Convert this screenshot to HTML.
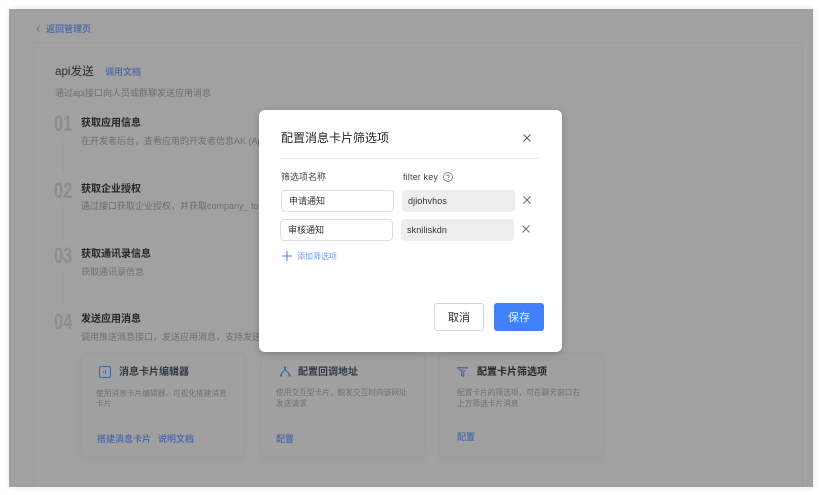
<!DOCTYPE html>
<html lang="zh"><head><meta charset="utf-8"><style>
html,body{margin:0;padding:0;background:#fff}
body{width:822px;height:495px;overflow:hidden;position:relative;font-family:"Liberation Sans","Noto Sans CJK SC",sans-serif}
.a{position:absolute;white-space:nowrap}
#page{position:absolute;left:9px;top:9px;width:804px;height:478px;background:#a1a1a1;box-shadow:0 0 6px rgba(0,0,0,.12);overflow:hidden}
#bg{position:absolute;left:-9px;top:-9px;width:822px;height:495px;filter:blur(.3px)}
.blue{color:#4464a8}
.t{font-size:10px;font-weight:700;color:#262626;line-height:14px}
.d{font-size:9px;color:#6e6e6e;line-height:13px}
.n{font-family:"Liberation Sans",sans-serif;font-weight:700;font-size:22px;color:#8d8d8d;line-height:24px;transform:scaleX(.75);transform-origin:left top}
.card{position:absolute;top:353px;height:104px;background:#a0a0a0;border:1px solid #9b9b9b;border-radius:4px;box-sizing:border-box;box-shadow:0 3px 10px rgba(0,0,0,.03)}
.ct{font-size:10px;font-weight:700;color:#333a44;line-height:14px}
.cd{font-size:7.7px;color:#707070;line-height:11px}
.cl{font-size:9px;color:#4464a8;font-weight:500;line-height:13px}
#dlg{position:absolute;left:259px;top:110px;width:303px;height:242px;background:#fff;border-radius:6px;box-shadow:0 2px 8px rgba(0,0,0,.18)}
.in{position:absolute;box-sizing:border-box;height:22px;border-radius:4px;font-size:9px;line-height:20px;color:#333;white-space:nowrap}
.w{background:#fff;border:1px solid #dedede;padding-left:7px;width:113px}
.g{background:#ededed;padding-left:6px;width:113px;line-height:22px}
svg{position:absolute;overflow:visible}
</style></head><body>
<div id="page"><div id="bg">
<svg style="left:35px;top:25px" width="6" height="8" viewBox="0 0 6 8"><path d="M4.500 1.500 L2 4 L4.500 6.500" fill="none" stroke="#4464a8" stroke-width=".7"/></svg>
<div class="a blue" style="left:46px;top:22px;font-size:9px;line-height:14px;font-weight:500">返回管理页</div>
<div class="a" style="left:33px;top:42px;width:770px;height:460px;border:1px solid #9c9c9c;box-sizing:border-box"></div>
<div class="a" style="left:55px;top:64px;font-size:11.600px;line-height:16px;color:#2a2a2a">api发送</div>
<div class="a blue" style="left:105px;top:65px;font-size:9px;line-height:14px;font-weight:500">调用文档</div>
<div class="a d" style="left:55px;top:87px">通过api接口向人员或群聊发送应用消息</div>

<div class="a n" style="left:54px;top:112px">01</div>
<div class="a t" style="left:81px;top:117px">获取应用信息</div>
<div class="a d" style="left:81px;top:135px">在开发者后台，查看应用的开发者信息AK (App</div>
<svg style="left:60px;top:138px" width="8" height="36" viewBox="0 0 8 36"><path d="M2.500 0V34L6 30.500" fill="none" stroke="#989898" stroke-width=".8"/></svg>

<div class="a n" style="left:54px;top:179px">02</div>
<div class="a t" style="left:81px;top:183px">获取企业授权</div>
<div class="a d" style="left:81px;top:200px">通过接口获取企业授权，并获取company_ token</div>
<svg style="left:60px;top:204px" width="8" height="36" viewBox="0 0 8 36"><path d="M2.500 0V34L6 30.500" fill="none" stroke="#989898" stroke-width=".8"/></svg>

<div class="a n" style="left:54px;top:244px">03</div>
<div class="a t" style="left:81px;top:248px">获取通讯录信息</div>
<div class="a d" style="left:81px;top:266px">获取通讯录信息</div>
<svg style="left:60px;top:269px" width="8" height="36" viewBox="0 0 8 36"><path d="M2.500 0V34L6 30.500" fill="none" stroke="#989898" stroke-width=".8"/></svg>

<div class="a n" style="left:54px;top:310px">04</div>
<div class="a t" style="left:81px;top:313px">发送应用消息</div>
<div class="a d" style="left:81px;top:331px">调用推送消息接口，发送应用消息，支持发送</div>

<div class="card" style="left:81px;width:164px"></div>
<svg style="left:99px;top:366px" width="12" height="12" viewBox="0 0 12 12"><rect x=".5" y=".5" width="11" height="11" rx="1.500" fill="#9aa0ad" stroke="#4464a8" stroke-width="1"/><path d="M4.500 5.500v1.500M6.500 4v4" stroke="#4464a8" stroke-width=".9"/></svg>
<div class="a ct" style="left:119px;top:366px">消息卡片编辑器</div>
<div class="a cd" style="left:96px;top:388px">使用消息卡片编辑器，可视化搭建消息</div>
<div class="a cd" style="left:96px;top:398px">卡片</div>
<div class="a cl" style="left:97px;top:433px">搭建消息卡片</div>
<div class="a cl" style="left:158px;top:433px">说明文档</div>

<div class="card" style="left:261px;width:164px"></div>
<svg style="left:280px;top:366px" width="11" height="11" viewBox="0 0 11 11"><path d="M1 9 C1 6 5 6 5 2 C5 6 9.500 6 9.500 9" fill="none" stroke="#4464a8" stroke-width="1.100"/><circle cx="5" cy="1.500" r="1.200" fill="#4464a8"/><circle cx="1" cy="9.500" r="1.100" fill="#4464a8"/><circle cx="9.500" cy="9.500" r="1.100" fill="#4464a8"/></svg>
<div class="a ct" style="left:298px;top:366px">配置回调地址</div>
<div class="a cd" style="left:276px;top:387px">使用交互型卡片，触发交互时向该网址</div>
<div class="a cd" style="left:276px;top:398px">发送请求</div>
<div class="a cl" style="left:276px;top:433px">配置</div>

<div class="card" style="left:439px;width:164px"></div>
<svg style="left:457px;top:367px" width="11" height="10" viewBox="0 0 11 10"><path d="M.5 .6H10.500L6.800 4.500V9.500L4.500 8.500V4.500Z" fill="#7f8ba5" stroke="#4464a8" stroke-width=".9"/><path d="M7 2.500H10" stroke="#a1a1a1" stroke-width="1"/></svg>
<div class="a ct" style="left:477px;top:366px;color:#262626">配置卡片筛选项</div>
<div class="a cd" style="left:457px;top:387px">配置卡片的筛选项，可在聊天窗口右</div>
<div class="a cd" style="left:457px;top:398px">上方筛选卡片消息</div>
<div class="a cl" style="left:457px;top:431px">配置</div>
</div></div>

<div id="dlg">
<div class="a" style="left:22px;top:19px;font-size:12px;line-height:18px;color:#262626">配置消息卡片筛选项</div>
<svg style="left:264px;top:24px" width="8" height="8" viewBox="0 0 8 8"><path d="M.5 .5L7.500 7.500M7.500 .5L.5 7.500" stroke="#555" stroke-width=".9"/></svg>
<div class="a" style="left:21px;top:48px;width:259px;height:1px;background:#ebebeb"></div>
<div class="a" style="left:22px;top:60px;font-size:9px;line-height:14px;color:#444">筛选项名称</div>
<div class="a" style="left:144px;top:60px;font-size:9px;line-height:14px;color:#444;letter-spacing:.15px">filter key</div>
<svg style="left:184px;top:62px" width="10" height="10" viewBox="0 0 10 10"><circle cx="5" cy="5" r="4.500" fill="none" stroke="#666" stroke-width=".7"/><path d="M3.700 4C3.800 2.500 6.300 2.500 6.300 4C6.300 5 5 5 5 6.200" fill="none" stroke="#666" stroke-width=".7"/><circle cx="5" cy="7.400" r=".5" fill="#666"/></svg>
<div class="in w" style="left:22px;top:80px">申请通知</div>
<div class="in g" style="left:143px;top:80px;letter-spacing:.1px">djiohvhos</div>
<svg style="left:264px;top:86px" width="8" height="8" viewBox="0 0 8 8"><path d="M.5 .5L7.500 7.500M7.500 .5L.5 7.500" stroke="#666" stroke-width=".9"/></svg>
<div class="in w" style="left:21px;top:109px">审核通知</div>
<div class="in g" style="left:142px;top:109px;letter-spacing:.1px">skniliskdn</div>
<svg style="left:263px;top:115px" width="8" height="8" viewBox="0 0 8 8"><path d="M.5 .5L7.500 7.500M7.500 .5L.5 7.500" stroke="#666" stroke-width=".9"/></svg>
<svg style="left:23px;top:141px" width="10" height="10" viewBox="0 0 10 10"><path d="M5 0V10M0 5H10" stroke="#4a7fe0" stroke-width="1"/></svg>
<div class="a" style="left:38px;top:141px;font-size:8px;line-height:12px;color:#6f9cf5">添加筛选项</div>
<div class="a" style="left:175px;top:193px;width:50px;height:28px;box-sizing:border-box;border:1px solid #d4d4d4;border-radius:3px;background:#fff;font-size:11px;line-height:29px;text-align:center;color:#2b2b2b">取消</div>
<div class="a" style="left:235px;top:193px;width:50px;height:28px;border-radius:3px;background:#4080fb;font-size:11px;line-height:30px;text-align:center;color:#e8f0ff">保存</div>
</div>
</body></html>
